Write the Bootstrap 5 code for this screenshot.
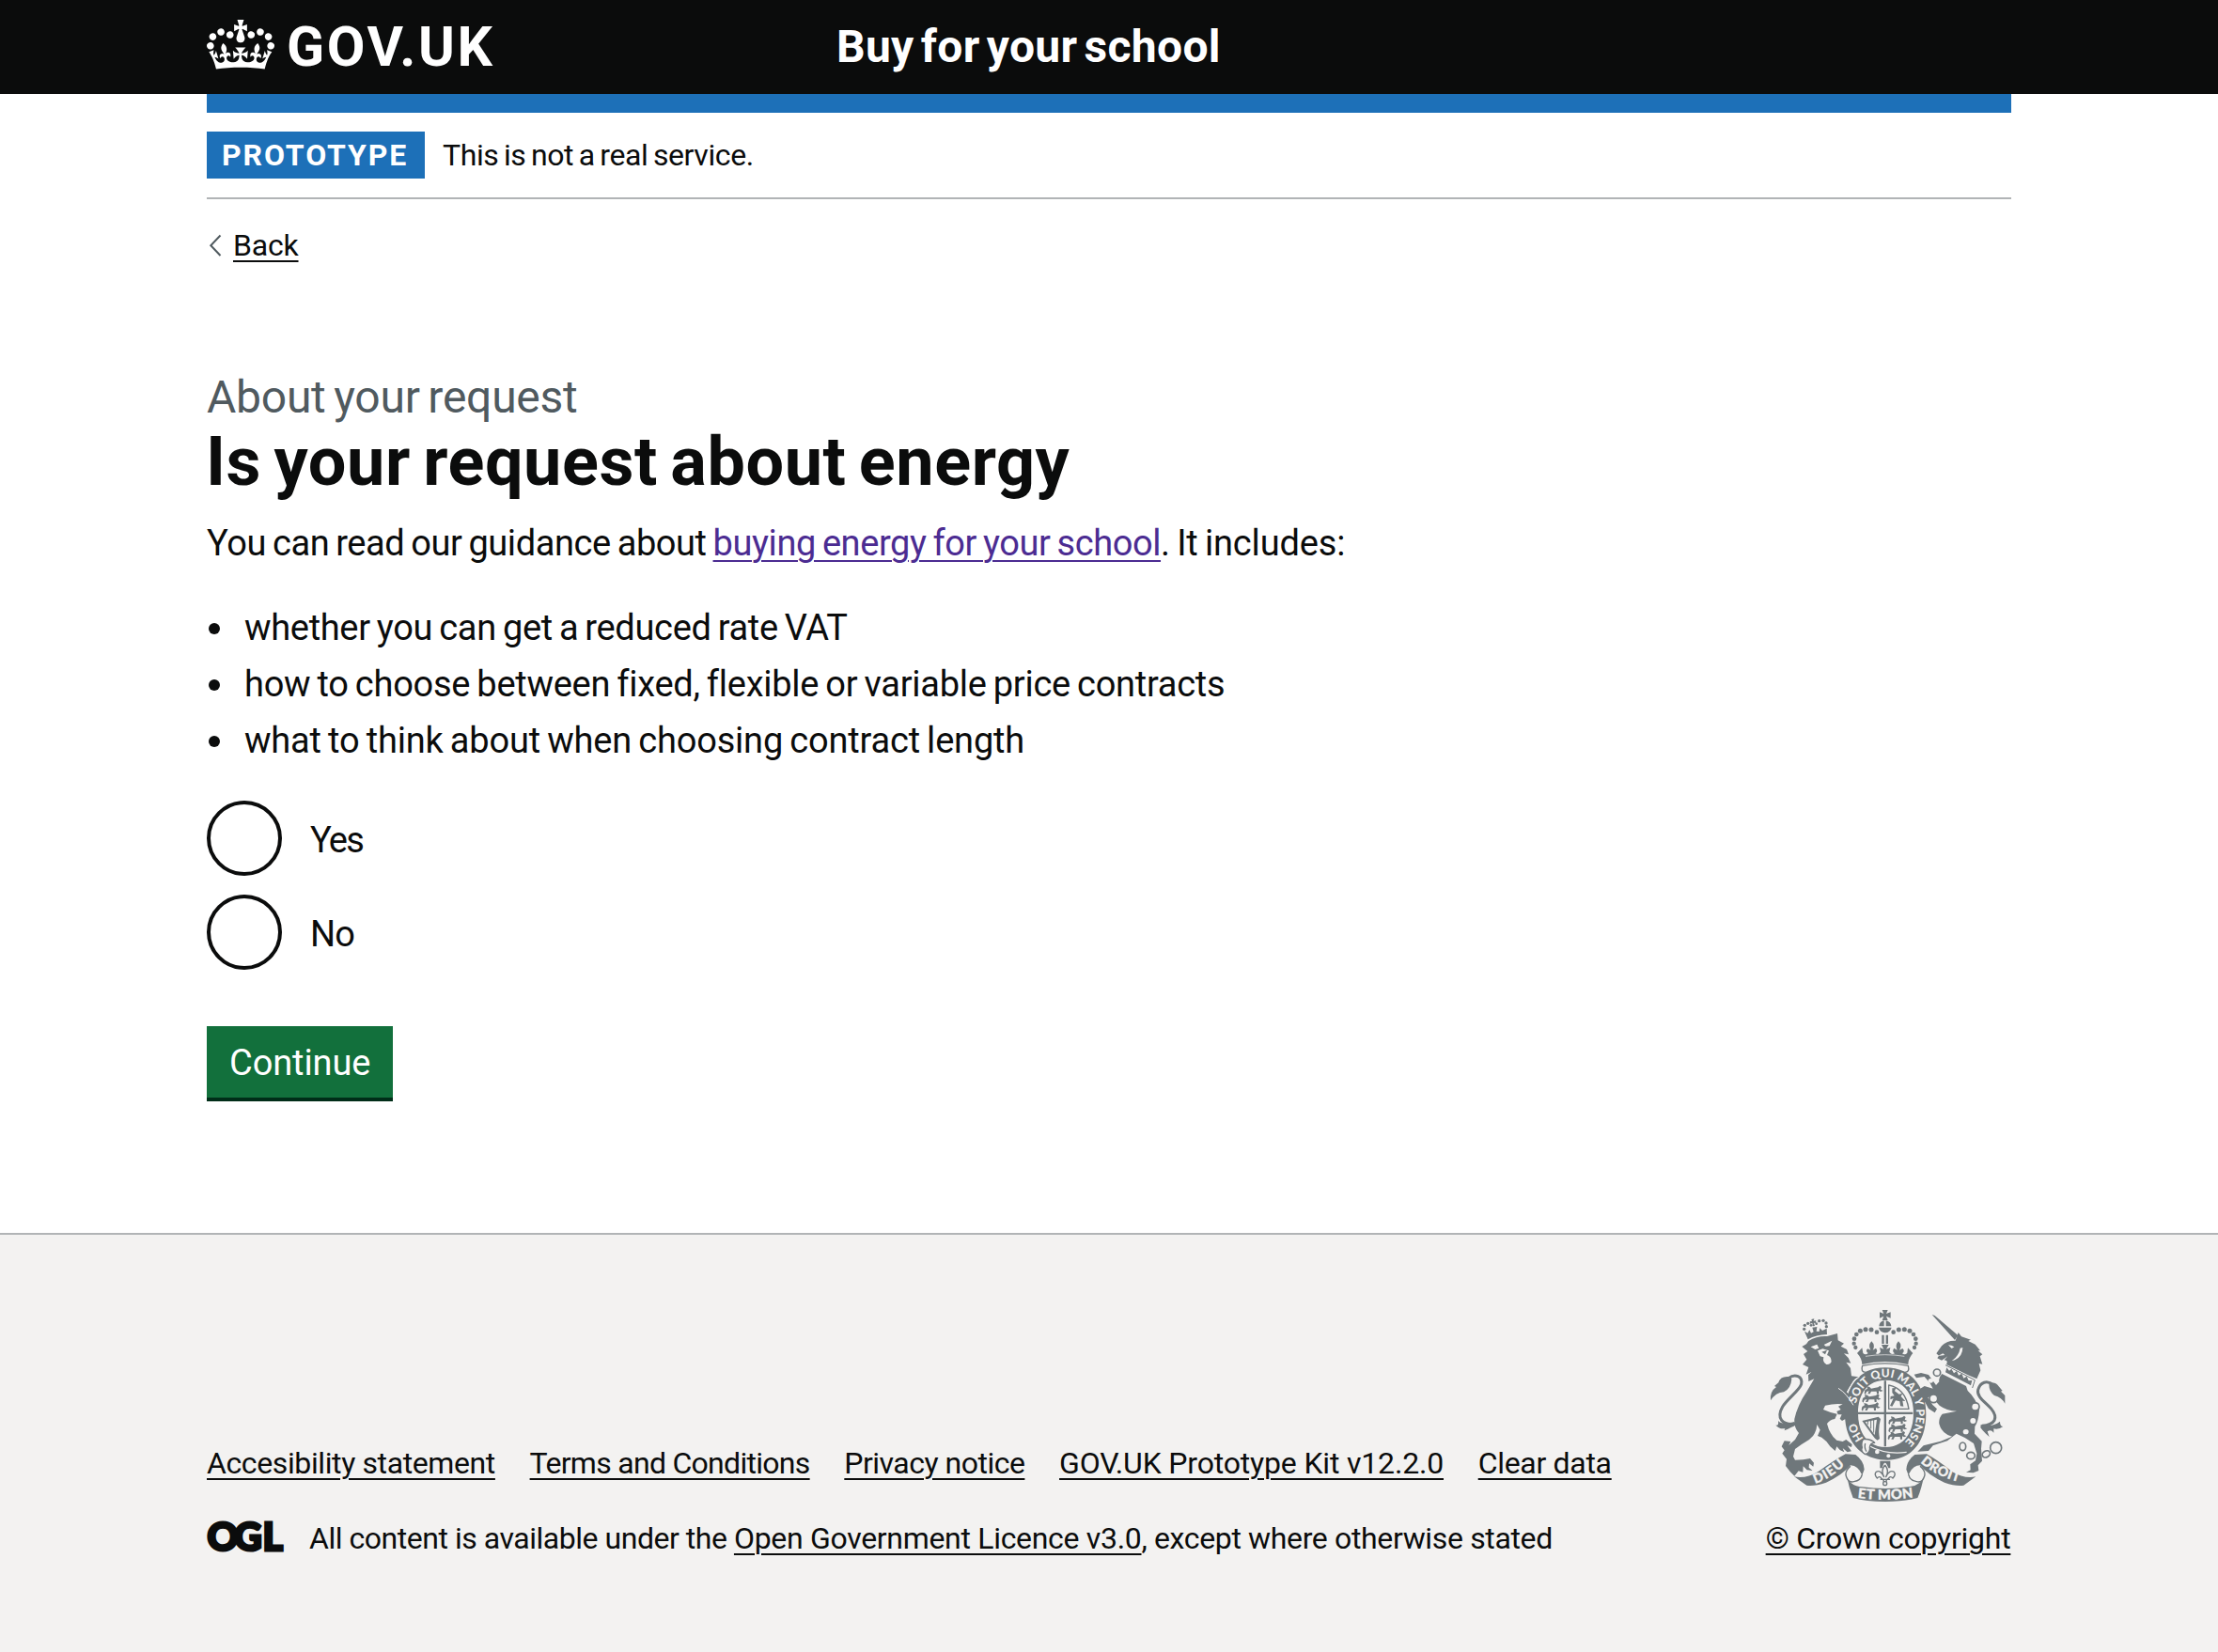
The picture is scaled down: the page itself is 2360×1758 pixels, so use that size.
<!DOCTYPE html>
<html lang="en">
<head>
<meta charset="utf-8">
<meta name="viewport" content="width=device-width, initial-scale=1">
<title>Is your request about energy - Buy for your school</title>
<link href="https://cdn.jsdelivr.net/npm/bootstrap@5.3.0/dist/css/bootstrap.min.css" rel="stylesheet">
<style>
  body { font-family: Roboto, "Liberation Sans", sans-serif; font-size: 38px; line-height: 50px; color: #0b0c0c; background: #fff; min-height: 1758px; }
  .page-width { width: 1920px; margin-left: auto; margin-right: auto; }
  .site-header { background: #0b0c0c; height: 100px; }
  .logo-col { width: 670px; }
  .logo-crown { width: 72px; height: 53px; margin-top: -5px; }
  .logo-text { font-size: 59px; line-height: 60px; font-weight: 700; letter-spacing: 2.6px; margin-left: 13px; margin-top: -1px; }
  .service-name { font-size: 48px; line-height: 60px; font-weight: 700; letter-spacing: .3px; word-spacing: -5px; margin-top: -1px; }
  .blue-bar { height: 20px; background: #1d70b8; }
  .phase-banner { padding: 20px 0; border-bottom: 2px solid #b1b4b6; }
  .phase-tag { width: 232px; height: 50px; background: #1d70b8; color: #fff; font-size: 32px; line-height: 50px; font-weight: 700; letter-spacing: 1.9px; padding-left: 16px; }
  .phase-text { font-size: 32px; line-height: 50px; margin-left: 19px; letter-spacing: -.4px; word-spacing: -2px; }
  .page-link-text { text-decoration: underline; text-decoration-thickness: 2px; text-underline-offset: 5px; color: #0b0c0c; }
  .back-row { margin-top: 29px; font-size: 32px; line-height: 40px; letter-spacing: -.2px; }
  .back-arrow { width: 14px; height: 24px; margin-left: 2px; margin-right: 12px; }
  .caption-text { margin-top: 112px; font-size: 48px; line-height: 60px; letter-spacing: -.25px; word-spacing: -3px; color: #505a5f; }
  .page-heading { font-size: 72px; line-height: 78px; font-weight: 700; letter-spacing: .55px; word-spacing: -5px; margin: 0 0 0 -1px; }
  .intro { margin: 22px 0 0; letter-spacing: -.43px; word-spacing: -2px; }
  .intro a { letter-spacing: -.42px; }
  .intro a.page-link-text { color: #4c2c92; }
  .intro span { letter-spacing: -.15px; }
  .bullets { margin: 40px 0 0; padding: 0; list-style: none; word-spacing: -2px; }
  .bullets li { display: flex; align-items: center; margin-bottom: 10px; letter-spacing: -.27px; }
  .bullets li::before { content: ""; width: 12px; height: 12px; border-radius: 50%; background: #0b0c0c; margin: 1px 26px 0 2px; }
  .bullets li:nth-child(1) { letter-spacing: -.33px; }
  .bullets li:nth-child(3) { letter-spacing: -.19px; margin-bottom: 0; }
  .choices { margin-top: 39px; gap: 20px; }
  .choice .form-check-input { width: 80px; height: 80px; margin: 0; border: 4px solid #0b0c0c; background-color: #fff; }
  .choice label { margin-left: 30px; padding-top: 4px; letter-spacing: -.9px; }
  .choice:first-child label { letter-spacing: -1.8px; }
  .btn-continue { margin-top: 60px; width: 198px; height: 80px; padding: 2px 0 0 24px; text-align: left; border: 0; border-bottom: 4px solid #002d18; border-radius: 0; background: #12703c; color: #fff; font-size: 38px; line-height: 74px; letter-spacing: -.1px; }
  .btn-continue:hover { background: #0a5a30; color: #fff; }
  .site-footer { margin-top: 140px; height: 446px; border-top: 2px solid #b1b4b6; background: #f3f2f1; padding-top: 80px; font-size: 32px; line-height: 40px; }
  .footer-body { height: 263px; }
  .footer-links { gap: 36.7px; margin-bottom: 40px; }
  .footer-links a { white-space: nowrap; }
  .ls-a { letter-spacing: -.39px; } .ls-b { letter-spacing: -.71px; } .ls-c { letter-spacing: -.51px; }
  .ls-d { letter-spacing: -.18px; } .ls-e { letter-spacing: -.31px; } .ls-f { letter-spacing: -.47px; } .ls-g { letter-spacing: -.36px; }
  .ogl-mark { width: 82px; height: 34px; margin-right: 27px; margin-top: -5px; overflow: visible; }
  .crown-copy { width: 262px; letter-spacing: -.25px; white-space: nowrap; }
  .royal-arms { width: 250px; height: 204px; margin-bottom: 19px; overflow: visible; }
</style>
</head>
<body>
<header class="site-header">
  <div class="page-width h-100 d-flex align-items-center text-white">
    <div class="logo-col d-flex align-items-center">
      <svg class="logo-crown" viewBox="0 0 132 97" fill="currentColor" fill-rule="evenodd" aria-hidden="true"><path d="M25 30.2c3.5 1.5 7.7-.2 9.1-3.7 1.5-3.6-.2-7.8-3.9-9.2-3.6-1.4-7.6.3-9.1 3.9-1.4 3.5.3 7.5 3.9 9zM9 39.5c3.6 1.5 7.8-.2 9.2-3.7 1.5-3.6-.2-7.8-3.9-9.1-3.6-1.5-7.6.2-9.1 3.8-1.4 3.5.3 7.5 3.8 9zM4.4 57.2c3.5 1.5 7.7-.2 9.1-3.8 1.5-3.6-.2-7.7-3.9-9.1-3.5-1.5-7.6.3-9.1 3.8-1.4 3.5.3 7.6 3.9 9.1zm38.3-21.4c3.5 1.5 7.7-.2 9.1-3.8 1.5-3.6-.2-7.7-3.9-9.1-3.6-1.5-7.6.3-9.1 3.8-1.3 3.6.4 7.7 3.9 9.1zm64.4-5.6c-3.6 1.5-7.8-.2-9.1-3.7-1.5-3.6.2-7.8 3.8-9.2 3.6-1.4 7.7.3 9.2 3.9 1.3 3.5-.4 7.5-3.9 9zm15.9 9.3c-3.6 1.5-7.7-.2-9.1-3.7-1.5-3.6.2-7.8 3.7-9.1 3.6-1.5 7.7.2 9.2 3.8 1.5 3.5-.3 7.5-3.8 9zm4.7 17.7c-3.6 1.5-7.8-.2-9.2-3.8-1.5-3.6.2-7.7 3.9-9.1 3.6-1.5 7.7.3 9.2 3.8 1.3 3.5-.4 7.6-3.9 9.1zM89.3 35.8c-3.6 1.5-7.8-.2-9.2-3.8-1.4-3.6.2-7.7 3.9-9.1 3.6-1.5 7.7.3 9.2 3.8 1.4 3.6-.3 7.7-3.9 9.1zM69.7 17.7l8.9 4.7V9.3l-8.9 2.8c-.2-.3-.5-.6-.9-.9L72.4 0H59.6l3.5 11.2c-.3.3-.6.5-.9.9l-8.8-2.8v13.1l8.8-4.7c.3.3.6.7.9.9l-5 15.4v.1c-.2.8-.4 1.6-.4 2.4 0 4.1 3.1 7.5 7 8.1h.2c.3 0 .7.1 1 .1.4 0 .7 0 1-.1h.2c4-.6 7.1-4.1 7.1-8.1 0-.8-.1-1.7-.4-2.4V34l-5.1-15.4c.4-.2.7-.6 1-.9zM66 92.8c16.9 0 32.8 1.1 47.1 3.2 4-16.9 8.9-26.7 14-33.5l-9.6-3.4c1 4.9 1.1 7.2 0 10.2-1.5-1.4-3-4.3-4.2-8.7L108.6 76c2.8-2 5-3.2 7.5-3.3-4.4 9.4-10 11.9-13.6 11.2-4.3-.8-6.3-4.6-5.6-7.9 1-4.7 5.7-5.9 8-.5 4.3-8.7-3-11.4-7.6-8.8 7.1-7.2 7.9-13.5 2.1-21.1-8 6.1-8.1 12.3-4.5 20.8-4.7-5.4-12.1-2.5-9.5 6.2 3.4-5.2 7.9-2 7.2 3.1-.6 4.3-6.4 7.8-13.5 7.2-10.3-.9-10.9-8-11.2-13.8 2.5-.5 7.1 1.8 11 7.3L80.2 60c-4.1 4.4-8 5.3-12.3 5.4 1.4-4.4 8-11.6 8-11.6H55.5s6.4 7.2 7.9 11.6c-4.2-.1-8-1-12.3-5.4l1.4 16.4c3.9-5.5 8.5-7.7 10.9-7.3-.3 5.8-.9 12.8-11.1 13.8-7.2.6-12.9-2.9-13.5-7.2-.7-5 3.8-8.3 7.1-3.1 2.7-8.7-4.6-11.6-9.4-6.2 3.7-8.5 3.6-14.7-4.6-20.8-5.8 7.6-5 13.9 2.2 21.1-4.7-2.6-11.9.1-7.7 8.8 2.3-5.5 7.1-4.2 8.1.5.7 3.3-1.3 7.1-5.7 7.9-3.5.7-9-1.8-13.5-11.2 2.5.1 4.7 1.3 7.5 3.3l-4.7-15.4c-1.2 4.4-2.7 7.2-4.3 8.7-1.1-3-.9-5.3 0-10.2l-9.5 3.4c5 6.9 9.9 16.7 14 33.5 14.8-2.1 30.8-3.2 47.7-3.2z"/></svg>
      <span class="logo-text">GOV.UK</span>
    </div>
    <div class="service-name">Buy for your school</div>
  </div>
</header>

<div class="page-width">
  <div class="blue-bar"></div>
  <div class="phase-banner d-flex">
    <strong class="phase-tag">PROTOTYPE</strong>
    <span class="phase-text">This is not a real service.</span>
  </div>
  <div class="back-row d-flex align-items-center">
    <svg class="back-arrow" viewBox="0 0 14 24" fill="none" stroke="#505a5f" stroke-width="2" aria-hidden="true"><path d="M12.5 1.5 2.3 12.2 12.5 23"/></svg>
    <a class="page-link-text" href="#">Back</a>
  </div>

  <main>
    <div class="caption-text">About your request</div>
    <h1 class="page-heading">Is your request about energy</h1>
    <p class="intro">You can read our guidance about <a class="page-link-text" href="#">buying energy for your school</a><span>. It includes:</span></p>
    <ul class="bullets">
      <li>whether you can get a reduced rate VAT</li>
      <li>how to choose between fixed, flexible or variable price contracts</li>
      <li>what to think about when choosing contract length</li>
    </ul>
    <form>
      <div class="choices d-flex flex-column">
        <div class="choice d-flex align-items-center"><input class="form-check-input" type="radio" name="energy" id="yes"><label for="yes">Yes</label></div>
        <div class="choice d-flex align-items-center"><input class="form-check-input" type="radio" name="energy" id="no"><label for="no">No</label></div>
      </div>
      <button type="button" class="btn btn-continue d-block">Continue</button>
    </form>
  </main>
</div>

<footer class="site-footer">
  <div class="page-width footer-body d-flex justify-content-between align-items-end">
    <div>
      <nav class="footer-links d-flex">
        <a class="page-link-text ls-a" href="#">Accesibility statement</a>
        <a class="page-link-text ls-b" href="#">Terms and Conditions</a>
        <a class="page-link-text ls-c" href="#">Privacy notice</a>
        <a class="page-link-text ls-d" href="#">GOV.UK Prototype Kit v12.2.0</a>
        <a class="page-link-text ls-e" href="#">Clear data</a>
      </nav>
      <div class="d-flex align-items-center">
        <svg class="ogl-mark" viewBox="0 0 82 34" role="img" aria-label="Open Government Licence"><text y="31.5" x=".4 29 59.5" font-family="Lato, sans-serif" font-weight="900" font-size="41" fill="#0b0c0c" stroke="#0b0c0c" stroke-width="3">OGL</text></svg>
        <span class="ls-f">All content is available under the <a class="page-link-text ls-e" href="#">Open Government Licence v3.0</a><span class="ls-g">, except where otherwise stated</span></span>
      </div>
    </div>
    <div class="crown-copy text-center">
      <svg class="royal-arms d-block mx-auto" viewBox="42 42 750 612" fill="#6f777b" stroke-linejoin="round" aria-hidden="true">
        <defs>
          <path id="garterTop" d="M340 454A98 116 0 1 1 462 470"/>
          <path id="dieuLine" d="M184 596Q238 580 292 524"/>
          <path id="droitLine" d="M520 528Q575 580 680 600"/>
          <path id="monLine" d="M314 641Q408 654 508 639"/>
          <g id="beast"><path d="M0 8L8 3L6-4L15-2L20 3L30 1L42-1L48-6L53-2L50 6L58 10L50 13L44 10L44 20L38 20L37 12L20 12L16 20L9 20L13 11L5 13L2 22L-2 18Z"/></g>
        </defs>

        <!-- imperial crown -->
        <path d="M398 42H416L411 54L425 49V68L411 62L416 75H398L403 62L390 68V49L403 54Z"/>
        <path d="M388 94A20 20 0 0 1 404 76V94ZM410 76A20 20 0 0 1 427 94H410ZM387 98H428Q424 114 407 115Q391 113 387 98Z"/>
        <g>
          <circle cx="381" cy="113" r="7"/><circle cx="363" cy="105" r="7.5"/><circle cx="345" cy="104" r="7.5"/><circle cx="328" cy="109" r="7.5"/><circle cx="316" cy="120" r="7"/><circle cx="309" cy="134" r="7"/><circle cx="308" cy="149" r="6.5"/><circle cx="313" cy="162" r="6.5"/>
          <circle cx="434" cy="113" r="7"/><circle cx="451" cy="105" r="7.5"/><circle cx="469" cy="104" r="7.5"/><circle cx="486" cy="109" r="7.5"/><circle cx="498" cy="120" r="7"/><circle cx="505" cy="134" r="7"/><circle cx="506" cy="149" r="6.5"/><circle cx="501" cy="162" r="6.5"/>
        </g>
        <path d="M397 122H404V150H397ZM410 122H417V150H410Z"/>
        <path d="M318 180L334 163L337 180Q345 188 353 180Q343 172 352 166L361 170Q352 154 364 142Q377 154 368 170L378 164Q386 174 377 181Q389 187 393 175L390 162L403 167L396 153H419L411 167L424 162L421 176Q428 187 438 181Q428 174 436 164L446 170Q438 154 450 142Q463 154 453 170L463 165Q472 173 462 181Q471 187 478 179L480 163L496 180Q481 197 481 216Q407 198 334 216Q333 196 318 180Z"/>
        <path d="M345 190Q407 180 469 190" fill="none" stroke="#f3f2f1" stroke-width="2"/>

        <!-- garter and shield -->
        <path fill-rule="evenodd" d="M409 226C490 226 538 285 538 374C538 465 490 521 415 521C330 521 279 462 279 374C279 285 328 226 409 226ZM409 266C352 266 321 308 321 372C321 438 354 480 409 480C464 480 498 438 498 372C498 308 466 266 409 266Z"/>
        <path d="M335 220Q407 205 481 220Q487 241 470 241Q407 215 346 241Q328 241 335 220Z" fill="#f3f2f1" stroke="#6f777b" stroke-width="4"/>
        <path d="M404 268H411V478H404ZM321 368H496V375H321Z"/>
        <use href="#beast" transform="translate(343 290)"/><use href="#beast" transform="translate(336 316)"/><use href="#beast" transform="translate(334 343)"/>
        <use href="#beast" transform="translate(420 386)"/><use href="#beast" transform="translate(420 411)"/><use href="#beast" transform="translate(418 435)"/>
        <path d="M419 282Q472 292 483 358H419Z" fill="none" stroke="#6f777b" stroke-width="4"/>
        <path d="M430 292L442 291L438 301L452 311L463 308L458 318L472 333L463 332L466 350L456 349L454 334L441 331L430 350L423 348L434 324L424 328L425 318L437 316L430 306Z"/>
        <path d="M334 396L386 383L393 390Q384 421 390 453L383 458L375 452Q354 425 334 396ZM344 400L374 441L381 392Z" fill-rule="evenodd"/>
        <path d="M352 396L352 408M362 393V421M371 391V434" stroke="#6f777b" stroke-width="3"/>
        <path d="M352 474Q412 506 476 496" fill="none" stroke="#f3f2f1" stroke-width="4"/>
        <circle cx="382" cy="495" r="7" fill="#f3f2f1"/><circle cx="418" cy="508" r="6" fill="#f3f2f1"/>

        <!-- lion -->
        <g><circle cx="149" cy="103" r="5"/><circle cx="151" cy="91" r="5"/><circle cx="161" cy="85" r="5"/><circle cx="171" cy="91" r="4"/><circle cx="188" cy="86" r="4"/><circle cx="197" cy="77" r="5"/><circle cx="210" cy="76" r="5"/><circle cx="219" cy="84" r="5"/><circle cx="220" cy="95" r="5"/></g>
        <path d="M172 72L181 70L179 77L187 76L186 84L180 83L183 93L176 94L175 84L168 86L167 79L174 78Z"/>
        <path d="M150 110L160 116L166 106L171 116L179 112L175 98L190 96L188 110L197 111L199 100L207 108L221 101L222 120Q188 121 161 136Z"/>
        <path d="M142 159L156 151L163 141Q190 124 222 126L255 117L257 139L276 149L266 158L285 168L291 184L276 181L290 195L298 212L283 209L297 228L300 253L322 256Q308 262 300 278L285 303L300 325L321 355L316 381Q318 397 309 401L304 388L296 402L287 405L282 389L270 396L263 389L269 376L257 376L253 366L266 360L258 350L272 343Q247 340 216 347L210 360Q232 370 254 374L247 390Q232 392 222 405Q230 440 253 458L272 462L283 456L302 471L300 480L287 475L300 493L287 496L272 483L277 496L263 489L253 478L248 492L232 478Q222 460 205 449L192 444L200 425L190 408Q188 440 165 456Q138 472 120 486L114 510L120 521L146 520L168 516L180 530L178 542L165 532L164 545L176 555L158 553L146 541L145 560L131 556L118 572L104 558L90 540L93 518L79 500L86 490L77 478L86 460L106 462L100 474L120 456L132 435Q116 418 118 390Q128 345 157 303L181 262L163 270L162 250L172 240L155 248L163 225L144 216L157 200L147 183L160 174Z"/>
        <path d="M170 160L190 152L196 164L184 168ZM212 153L238 140L230 157L218 158ZM192 172L208 166L228 172L222 186Q236 190 236 207Q232 217 220 216Q207 209 211 193L200 190Z" fill="#f3f2f1"/>
        <path d="M205 176L222 170L216 184Z"/>
        <path d="M258 292Q284 308 306 346M326 255Q300 272 287 306" fill="none" stroke="#f3f2f1" stroke-width="3"/>
        <path d="M118 406C82 410 58 390 80 351C96 325 133 300 140 279C145 254 120 244 99 260" fill="none" stroke="#6f777b" stroke-width="9"/>
        <path d="M106 256Q74 250 67 274L54 285L60 288Q39 302 42 331Q58 306 84 304Q107 292 109 263ZM118 399Q78 410 66 396Q69 413 58 410Q72 424 88 420L86 427Q110 417 123 409Z"/>

        <!-- garter motto and buckle -->
        <g font-family="Lato, sans-serif" font-weight="900" font-size="36" fill="#f3f2f1">
          <text><textPath href="#garterTop" startOffset="2" textLength="56">HO</textPath></text>
          <text><textPath href="#garterTop" startOffset="119" textLength="407">SOIT QUI MAL Y PENSE</textPath></text>
        </g>
        <path d="M338 455Q360 452 374 466Q360 466 358 480Q362 496 344 503Q328 493 334 481Q330 464 338 455Z" fill="#f3f2f1" stroke="#6f777b" stroke-width="4"/>
        <path d="M344 468Q340 482 348 494" fill="none" stroke="#6f777b" stroke-width="4"/>

        <!-- unicorn -->
        <path d="M557 57L566 60L640 123L630 138Z"/>
        <path d="M641 114L651 127L681 137L673 141L695 152L711 172L704 172L718 184L710 190L718 215L707 213L712 235L700 262L672 250L603 216Q610 203 596 202L607 190L588 203L574 196L579 188L571 181L588 157Q603 139 632 140Z"/>
        <path d="M609 154Q620 154 628 160L620 165ZM647 164Q643 188 620 205L630 202Q655 190 655 162ZM576 189L592 181L598 186Z" fill="#f3f2f1"/>
        <path d="M589 246L666 285L671 300Q695 322 708 360Q706 397 694 414L693 437L716 461L714 485L717 524L704 538L706 555L689 562L666 560L680 553L679 535L696 523L700 500L690 468L662 450L635 437L606 460L560 475L546 492L511 494L530 475L585 461L621 446Q588 437 580 406Q578 387 590 374L636 365Q603 363 581 347L554 317L544 322L559 345L573 358L566 370L546 357L527 322L520 293L533 285L560 293L551 276L533 255L507 259L500 248L522 243L546 249L570 282L580 271Q577 258 589 246Z"/>
        <path d="M597 216L692 265L686 290L590 244Z" fill="#f3f2f1"/>
        <path d="M600 218L694 266L686 291" fill="none" stroke="#6f777b" stroke-width="3"/>
        <path d="M600 241L604 226L612 236L619 230L627 244L636 237L642 251L652 245L658 260L668 254L674 268L685 267L681 283Z"/>
        <path d="M717 412C758 408 771 388 745 356C724 334 699 318 704 297C711 273 732 264 754 282" fill="none" stroke="#6f777b" stroke-width="9"/>
        <path d="M739 277Q760 269 770 286L782 300L777 302L790 315V341Q780 321 756 315Q738 300 739 277ZM713 408Q748 418 774 398Q774 414 784 414Q768 426 754 421L754 434Q745 422 734 430L740 447Q720 430 712 418Z"/>
        <g fill="none" stroke="#6f777b" stroke-width="5"><circle cx="573" cy="242" r="11"/><circle cx="695" cy="351" r="13"/><ellipse cx="655" cy="478" rx="10" ry="13"/><ellipse cx="681" cy="507" rx="13" ry="11"/><ellipse cx="730" cy="502" rx="13" ry="10" transform="rotate(-30 730 502)"/><circle cx="761" cy="482" r="18"/></g>
        <circle cx="562" cy="325" r="13" fill="#f3f2f1" stroke="#6f777b" stroke-width="5"/>
        <ellipse cx="553" cy="268" rx="8" ry="7" fill="#f3f2f1"/><circle cx="695" cy="351" r="10" fill="#f3f2f1"/><circle cx="688" cy="396" r="9" fill="#f3f2f1"/><ellipse cx="665" cy="431" rx="9" ry="8" fill="#f3f2f1"/>

        <!-- motto scroll -->
        <path d="M117 574Q155 582 195 557Q248 520 281 502L313 504Q340 524 341 551L334 570Q322 539 297 538Q270 570 219 593Q180 606 157 602Z"/>
        <path d="M697 574Q660 582 620 557Q576 522 540 502L502 504Q476 524 475 551L482 570Q494 539 519 538Q546 570 597 593Q634 606 658 602Z"/>
        <path d="M297 541Q274 560 286 580Q293 594 308 590Q330 587 334 567M519 541Q542 560 530 580Q523 594 508 590Q486 587 482 567" fill="#f3f2f1" stroke="#6f777b" stroke-width="4"/>
        <path d="M285 572Q293 603 335 607Q408 617 480 607Q523 603 531 572Q524 612 511 642Q470 654 408 654Q346 654 305 642Q292 610 285 572Z"/>
        <g font-family="Lato, sans-serif" font-weight="900" font-size="42" fill="#f3f2f1" stroke="#f3f2f1" stroke-width="1">
          <text><textPath href="#dieuLine" textLength="112">DIEU</textPath></text>
          <text><textPath href="#droitLine" textLength="138">DROIT</textPath></text>
          <text font-size="44"><textPath href="#monLine" startOffset="6" textLength="178">ET MON</textPath></text>
        </g>
        <path d="M391 524H424V547H418Q412 530 407 530Q402 530 398 547H391Z"/>
        <path d="M407 537Q392 555 404 575Q393 551 379 559Q371 567 382 579Q390 570 396 580Q405 584 403 592M407 537Q422 555 410 575Q421 551 436 559Q443 567 432 579Q424 570 418 580Q409 584 411 592M392 583H423" fill="none" stroke="#6f777b" stroke-width="4"/>
        <circle cx="407" cy="596" r="6" fill="#f3f2f1" stroke="#6f777b" stroke-width="4"/>
      </svg>
      <a class="page-link-text" href="#">© Crown copyright</a>
    </div>
  </div>
</footer>
<script src="https://cdn.jsdelivr.net/npm/bootstrap@5.3.0/dist/js/bootstrap.bundle.min.js"></script>
</body>
</html>
